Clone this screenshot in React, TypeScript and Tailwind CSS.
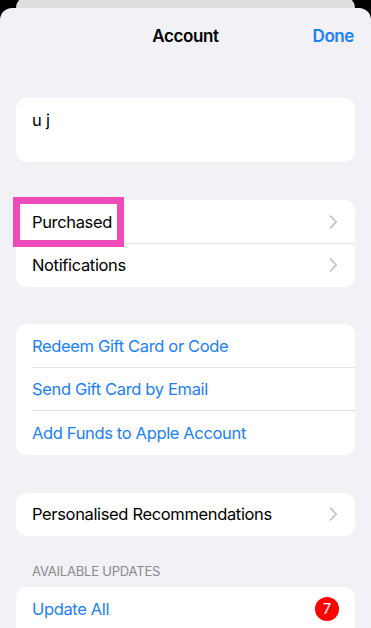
import React from "react";

const font = { fontFamily: "Inter, 'Noto Sans', sans-serif" };

function Chevron() {
  return (
    <svg width="9" height="14" viewBox="0 0 9 14" className="shrink-0">
      <path d="M1.5 1.2 L7.2 7 L1.5 12.8" fill="none" stroke="#c2c2c6" strokeWidth="1.7" strokeLinecap="round" strokeLinejoin="round" />
    </svg>
  );
}

function Row({
  label,
  blue,
  chevron,
  sep,
  right,
}: {
  label: string;
  blue?: boolean;
  chevron?: boolean;
  sep?: boolean;
  right?: React.ReactNode;
}) {
  return (
    <div className="relative flex h-[43.5px] items-center pl-4 pr-[17px]">
      <span className={`flex-1 pt-[1px] text-[16.5px] tracking-[-0.35px] ${blue ? "text-[#1a80fb]" : "text-black"}`}>{label}</span>
      {chevron && <Chevron />}
      {right}
      {sep && <div className="absolute bottom-0 left-4 right-0 h-px bg-[#e3e3e6]" />}
    </div>
  );
}

export default function App() {
  return (
    <div className="relative h-[628px] w-[371px] overflow-hidden bg-black" style={font}>
      <div className="absolute left-4 right-4 top-[-4px] h-6 rounded-t-[12px] bg-[#dedede]" />
      <div className="absolute left-0 right-0 top-2 bottom-0 rounded-t-[12px] bg-[#f1f1f6]">
        <div className="relative flex h-[54px] items-center justify-center pt-[4px]">
          <span className="text-[17px] font-semibold tracking-[-0.4px] text-black">Account</span>
          <span className="absolute right-[17px] text-[17px] font-semibold tracking-[-0.4px] text-[#1a80fb]">Done</span>
        </div>
        <div className="flex flex-col px-4">
          <div className="mt-[36px] h-[64px] rounded-[10px] bg-white px-4 pt-[10px]">
            <span className="text-[16.5px] tracking-[-0.2px] text-black">u j</span>
          </div>

          <div className="relative mt-[38px] rounded-[10px] bg-white">
            <Row label="Purchased" chevron sep />
            <Row label="Notifications" chevron />
            <div className="absolute left-[-3px] top-[-3px] h-[50px] w-[111px] border-[7px] border-[#ec4bb8]" />
          </div>

          <div className="mt-[37px] rounded-[10px] bg-white">
            <Row label="Redeem Gift Card or Code" blue sep />
            <Row label="Send Gift Card by Email" blue sep />
            <Row label="Add Funds to Apple Account" blue />
          </div>

          <div className="mt-[38px] rounded-[10px] bg-white">
            <Row label="Personalised Recommendations" chevron />
          </div>

          <div className="mt-[27px] px-4 text-[13px] leading-4 tracking-[-0.2px] text-[#8a8a8e]">AVAILABLE UPDATES</div>

          <div className="mt-[8px] h-[60px] rounded-[10px] bg-white">
            <Row
              label="Update All"
              blue
              right={
                <div className="mr-[-1px] flex h-6 w-6 items-center justify-center rounded-full bg-[#fe0000] text-[15px] text-white">
                  7
                </div>
              }
            />
          </div>
        </div>
      </div>
    </div>
  );
}
